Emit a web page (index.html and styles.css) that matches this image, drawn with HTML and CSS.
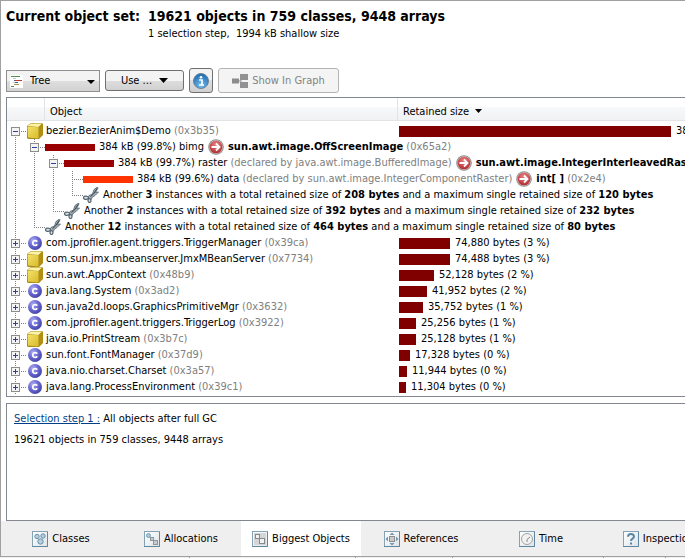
FILE: index.html
```html
<!DOCTYPE html>
<html lang="en">
<head>
<meta charset="utf-8">
<title>Heap Walker</title>
<link rel="stylesheet" href="styles.css">
</head>
<body>
<svg class="defs" aria-hidden="true">
  <defs>
    <radialGradient id="ball" cx="35%" cy="30%" r="75%"><stop offset="0" stop-color="#a9aaf2"/><stop offset="0.5" stop-color="#6a6ad2"/><stop offset="1" stop-color="#4444a6"/></radialGradient>
    <linearGradient id="face" x1="0" y1="0" x2="1" y2="1"><stop offset="0" stop-color="#f3e268"/><stop offset="1" stop-color="#d9bb2e"/></linearGradient>
    <radialGradient id="red" cx="50%" cy="30%" r="70%"><stop offset="0" stop-color="#e88484"/><stop offset="1" stop-color="#b52b30"/></radialGradient>
    <radialGradient id="blue" cx="50%" cy="80%" r="80%"><stop offset="0" stop-color="#72bdf0"/><stop offset="1" stop-color="#1d68b0"/></radialGradient>
    <linearGradient id="tile" x1="0" y1="0" x2="1" y2="1"><stop offset="0" stop-color="#ffffff"/><stop offset="1" stop-color="#dfe4e8"/></linearGradient>
  </defs>
  <symbol id="i-class" viewBox="0 0 16 16"><circle cx="8" cy="8" r="7" fill="url(#ball)"/><path d="M10.200 6.700A2.400 2.400 0 1 0 10.200 9.300" fill="none" stroke="#fff" stroke-width="1.800"/></symbol>
  <symbol id="i-cube" viewBox="0 0 16 16"><path d="M0 3 4 0H15L16 1V12L12 16H1L0 15Z" fill="#a98a18"/><path d="M0.5 3 4 .5H15L11.5 4Z" fill="#fbf3a6"/><path d="M11.500 4 15.500 1V11.500L12 15.500Z" fill="#b08f14"/><path d="M.5 3.500 11.500 4.200V15.500L1 14.500Z" fill="url(#face)"/></symbol>
  <symbol id="i-go" viewBox="0 0 16 16"><circle cx="8" cy="8" r="7.800" fill="#8d8d8d"/><circle cx="8" cy="8" r="7" fill="#c4b4b4"/><circle cx="8" cy="8" r="6.300" fill="url(#red)"/><path d="M3.500 8H11M8 4.500 11.500 8 8 11.500" fill="none" stroke="#fff" stroke-width="1.800"/></symbol>
  <symbol id="i-cut" viewBox="0 0 16 16"><path d="M14.500 0 11 2.500 9.500 7 6 8.500 4.500 10.500 7.500 13.500 9.500 10 12 8.500 15.500 5 12.500 5.500 15 1Z" fill="#9fadb5" stroke="#5f6e77" stroke-width=".9"/><path d="M14 1.500 10.500 7 7.500 9.500" fill="none" stroke="#39454c"/><ellipse cx="3" cy="10.800" rx="2.500" ry="1.600" fill="#d4dfe6" stroke="#56646d" stroke-width="1.200"/><ellipse cx="6.500" cy="13.600" rx="1.500" ry="1.900" fill="#d4dfe6" stroke="#56646d" stroke-width="1.200"/></symbol>
  <symbol id="i-plus" viewBox="0 0 9 9"><rect x=".5" y=".5" width="8" height="8" fill="#f4f4f2" stroke="#8c8c8c"/><path d="M2 4.500H7M4.500 2V7" stroke="#2c3f9c"/></symbol>
  <symbol id="i-minus" viewBox="0 0 9 9"><rect x=".5" y=".5" width="8" height="8" fill="#f4f4f2" stroke="#8c8c8c"/><path d="M2 4.500H7" stroke="#2c3f9c"/></symbol>
  <symbol id="i-tile" viewBox="0 0 16 16"><rect x=".5" y=".5" width="15" height="15" fill="url(#tile)" stroke="#86a3b5"/><path d="M15.500 1V15.500H0" fill="none" stroke="#5f87a0"/></symbol>
</svg>

<main class="window">
  <header class="summary">
    <h1 class="title">Current object set:</h1>
    <div class="title">19621 objects in 759 classes, 9448 arrays</div>
    <div class="subtitle">1 selection step,&nbsp; 1994 kB shallow size</div>
  </header>

  <div class="toolbar">
    <div class="picker">
      <svg class="picker-icon" viewBox="0 0 13 13" aria-hidden="true"><rect width="13" height="13" fill="#fff"/><path d="M1 1.500H10M1 11.500H4" stroke="#4d8d4d"/><path d="M3 3.500H6M3 7.500H5" stroke="#b9c2cf"/><path d="M4 5.500H6M5 7.500H8" stroke="#3f5e97"/><path d="M6 5.500H12" stroke="#c03a3a"/><path d="M4 9.500H9" stroke="#a89a48"/></svg>
      <select class="select" aria-label="View mode"><option>Tree</option></select>
      <svg class="picker-arrow" viewBox="0 0 8 4" aria-hidden="true"><path d="M0 0H8L4 4Z"/></svg>
    </div>
    <button class="button use" type="button">Use ...<svg class="arrow" viewBox="0 0 9 5" aria-hidden="true"><path d="M0 0H9L4.500 5Z"/></svg></button>
    <button class="button info" type="button" aria-label="Information"><svg class="icon" viewBox="0 0 16 16" aria-hidden="true"><circle cx="8" cy="8" r="7.500" fill="url(#blue)" stroke="#6b8296"/><circle cx="8" cy="4.300" r="1.300" fill="#fff"/><path d="M6 7H9V12M6 12H11" fill="none" stroke="#fff" stroke-width="1.700"/></svg></button>
    <button class="button graph" type="button" disabled><svg class="icon" viewBox="0 0 16 14" aria-hidden="true"><path d="M6 7H9M9 3V11" fill="none" stroke="#999"/><rect y="4.500" width="7" height="5" fill="#8c8c8c"/><rect x="8" width="8" height="6" fill="#929292"/><rect x="8" y="8" width="8" height="6" fill="#929292"/></svg>Show In Graph</button>
  </div>

  <section class="panel objects">
    <table class="tree">
      <colgroup><col class="col-icon"><col class="col-object"><col></colgroup>
      <thead>
        <tr><th aria-label="Type"></th><th>Object</th><th>Retained size<svg class="sort" viewBox="0 0 7 4" aria-hidden="true"><path d="M0 0H7L3.500 4Z"/></svg></th></tr>
      </thead>
      <tbody>
        <tr><td colspan="2"><div class="row"><i class="g down h"><svg><use href="#i-minus"/></svg></i><svg class="type"><use href="#i-cube"/></svg><span>bezier.BezierAnim$Demo <span class="id">(0x3b35)</span></span></div></td><td><div class="row"><b class="bar" style="width:272px"></b>384 kB (19 %)</div></td></tr>
        <tr><td colspan="3"><div class="row"><i class="g v"></i><i class="g v h"><svg><use href="#i-minus"/></svg></i><b class="bar ref"></b><span>384 kB (99.8%) bimg</span><svg class="go"><use href="#i-go"/></svg><span><strong>sun.awt.image.OffScreenImage</strong> <span class="id">(0x65a2)</span></span></div></td></tr>
        <tr><td colspan="3"><div class="row"><i class="g v"></i><i class="g v"></i><i class="g v h"><svg><use href="#i-minus"/></svg></i><b class="bar ref"></b><span>384 kB (99.7%) raster <span class="id">(declared by java.awt.image.BufferedImage)</span></span><svg class="go"><use href="#i-go"/></svg><span><strong>sun.awt.image.IntegerInterleavedRaster</strong></span></div></td></tr>
        <tr><td colspan="3"><div class="row"><i class="g v"></i><i class="g v"></i><i class="g v"></i><i class="g v h"></i><b class="bar ref hot"></b><span>384 kB (99.6%) data <span class="id">(declared by sun.awt.image.IntegerComponentRaster)</span></span><svg class="go"><use href="#i-go"/></svg><span><strong>int[ ]</strong> <span class="id">(0x2e4)</span></span></div></td></tr>
        <tr><td colspan="3"><div class="row"><i class="g v"></i><i class="g v"></i><i class="g v"></i><i class="g up h"></i><svg class="cut"><use href="#i-cut"/></svg><span>Another <strong>3</strong> instances with a total retained size of <strong>208 bytes</strong> and a maximum single retained size of <strong>120 bytes</strong></span></div></td></tr>
        <tr><td colspan="3"><div class="row"><i class="g v"></i><i class="g v"></i><i class="g up h"></i><svg class="cut"><use href="#i-cut"/></svg><span>Another <strong>2</strong> instances with a total retained size of <strong>392 bytes</strong> and a maximum single retained size of <strong>232 bytes</strong></span></div></td></tr>
        <tr><td colspan="3"><div class="row"><i class="g v"></i><i class="g up h"></i><svg class="cut"><use href="#i-cut"/></svg><span>Another <strong>12</strong> instances with a total retained size of <strong>464 bytes</strong> and a maximum single retained size of <strong>80 bytes</strong></span></div></td></tr>
        <tr><td colspan="2"><div class="row"><i class="g v h"><svg><use href="#i-plus"/></svg></i><svg class="type"><use href="#i-class"/></svg><span>com.jprofiler.agent.triggers.TriggerManager <span class="id">(0x39ca)</span></span></div></td><td><div class="row"><b class="bar" style="width:51px"></b>74,880 bytes (3 %)</div></td></tr>
        <tr><td colspan="2"><div class="row"><i class="g v h"><svg><use href="#i-plus"/></svg></i><svg class="type"><use href="#i-cube"/></svg><span>com.sun.jmx.mbeanserver.JmxMBeanServer <span class="id">(0x7734)</span></span></div></td><td><div class="row"><b class="bar" style="width:51px"></b>74,488 bytes (3 %)</div></td></tr>
        <tr><td colspan="2"><div class="row"><i class="g v h"><svg><use href="#i-plus"/></svg></i><svg class="type"><use href="#i-cube"/></svg><span>sun.awt.AppContext <span class="id">(0x48b9)</span></span></div></td><td><div class="row"><b class="bar" style="width:35px"></b>52,128 bytes (2 %)</div></td></tr>
        <tr><td colspan="2"><div class="row"><i class="g v h"><svg><use href="#i-plus"/></svg></i><svg class="type"><use href="#i-class"/></svg><span>java.lang.System <span class="id">(0x3ad2)</span></span></div></td><td><div class="row"><b class="bar" style="width:28px"></b>41,952 bytes (2 %)</div></td></tr>
        <tr><td colspan="2"><div class="row"><i class="g v h"><svg><use href="#i-plus"/></svg></i><svg class="type"><use href="#i-class"/></svg><span>sun.java2d.loops.GraphicsPrimitiveMgr <span class="id">(0x3632)</span></span></div></td><td><div class="row"><b class="bar" style="width:24px"></b>35,752 bytes (1 %)</div></td></tr>
        <tr><td colspan="2"><div class="row"><i class="g v h"><svg><use href="#i-plus"/></svg></i><svg class="type"><use href="#i-class"/></svg><span>com.jprofiler.agent.triggers.TriggerLog <span class="id">(0x3922)</span></span></div></td><td><div class="row"><b class="bar" style="width:17px"></b>25,256 bytes (1 %)</div></td></tr>
        <tr><td colspan="2"><div class="row"><i class="g v h"><svg><use href="#i-plus"/></svg></i><svg class="type"><use href="#i-cube"/></svg><span>java.io.PrintStream <span class="id">(0x3b7c)</span></span></div></td><td><div class="row"><b class="bar" style="width:17px"></b>25,128 bytes (1 %)</div></td></tr>
        <tr><td colspan="2"><div class="row"><i class="g v h"><svg><use href="#i-plus"/></svg></i><svg class="type"><use href="#i-class"/></svg><span>sun.font.FontManager <span class="id">(0x37d9)</span></span></div></td><td><div class="row"><b class="bar" style="width:11px"></b>17,328 bytes (0 %)</div></td></tr>
        <tr><td colspan="2"><div class="row"><i class="g v h"><svg><use href="#i-plus"/></svg></i><svg class="type"><use href="#i-class"/></svg><span>java.nio.charset.Charset <span class="id">(0x3a57)</span></span></div></td><td><div class="row"><b class="bar" style="width:8px"></b>11,944 bytes (0 %)</div></td></tr>
        <tr><td colspan="2"><div class="row"><i class="g v h"><svg><use href="#i-plus"/></svg></i><svg class="type"><use href="#i-class"/></svg><span>java.lang.ProcessEnvironment <span class="id">(0x39c1)</span></span></div></td><td><div class="row"><b class="bar" style="width:7px"></b>11,304 bytes (0 %)</div></td></tr>
      </tbody>
    </table>
  </section>

  <section class="panel steps">
    <p><a href="#step-1">Selection step 1 :</a> All objects after full GC</p>
    <p>19621 objects in 759 classes, 9448 arrays</p>
  </section>

  <nav class="tabs" aria-label="Heap walker views">
    <button class="tab" type="button"><svg class="icon" viewBox="0 0 16 16" aria-hidden="true"><use href="#i-tile"/><g fill="#b7d0e0" stroke="#6890aa"><circle cx="5" cy="5.500" r="2.200"/><circle cx="11" cy="5" r="2.200"/><circle cx="8.500" cy="10.500" r="2.700"/></g></svg>Classes</button>
    <button class="tab" type="button"><svg class="icon" viewBox="0 0 16 16" aria-hidden="true"><use href="#i-tile"/><circle cx="4.500" cy="4.500" r="2" fill="#a9c8da" stroke="#7ba0b8"/><path d="M6 6 11 11" stroke="#8b969d"/><rect x="6.500" y="6.500" width="3" height="3" fill="#c6cbce" stroke="#8b969d"/><rect x="9.500" y="9.500" width="4" height="4" fill="#c6cbce" stroke="#8b969d"/></svg>Allocations</button>
    <button class="tab active" type="button" aria-current="page"><svg class="icon" viewBox="0 0 16 16" aria-hidden="true"><use href="#i-tile"/><rect x="2" y="2" width="12" height="12" fill="#d3d5d6"/><g fill="#f3f3f3" stroke="#858a8d"><rect x="3.500" y="3.500" width="4" height="4"/><rect x="7.500" y="7.500" width="5" height="5"/></g></svg>Biggest Objects</button>
    <button class="tab" type="button"><svg class="icon" viewBox="0 0 16 16" aria-hidden="true"><use href="#i-tile"/><path d="M8 1.500 10.500 4H5.500ZM8 14.500 10.500 12H5.500ZM1.500 8 4 5.500V10.500ZM14.500 8 12 5.500V10.500Z" fill="#7098b2"/><rect x="5.500" y="5.500" width="5" height="5" fill="#c9c9c9" stroke="#8d8d8d"/></svg>References</button>
    <button class="tab" type="button"><svg class="icon" viewBox="0 0 16 16" aria-hidden="true"><use href="#i-tile"/><circle cx="8" cy="8" r="5.500" fill="#f2f2f2" stroke="#a2a2a2"/><path d="M11 6 8 8.500V11" fill="none" stroke="#868686"/></svg>Time</button>
    <button class="tab" type="button"><svg class="icon" viewBox="0 0 16 16" aria-hidden="true"><use href="#i-tile"/><path d="M5 5.800C5 2.200 11 2.200 11 5.500 11 7.500 8 7.500 8 10" fill="none" stroke="#5987a5" stroke-width="2"/><rect x="7" y="11.500" width="2" height="2" fill="#5987a5"/></svg>Inspections</button>
  </nav>
</main>
<footer class="status"><i></i><i></i><i></i><i></i><i></i><i></i></footer>
</body>
</html>
```

FILE: styles.css
```css
* { box-sizing: border-box; }

body {
  margin: 0;
  height: 100vh;
  display: flex;
  flex-direction: column;
  overflow: hidden;
  background: #fff;
  color: #000;
  font: 11px/16px Tahoma, "DejaVu Sans Condensed", sans-serif;
  white-space: nowrap;
}

button, select { font: inherit; color: inherit; }
svg { display: block; flex: none; }
.defs { position: absolute; width: 0; height: 0; }
.icon { width: 16px; height: 16px; }

.window {
  flex: 1;
  min-height: 0;
  display: flex;
  flex-direction: column;
  border: solid #a0a0a0;
  border-width: 1px 0 1px 1px;
}

.summary {
  display: grid;
  grid-template-columns: 142px 1fr;
  padding: 5px 0 0 5px;
}
.title { margin: 0; font-size: 14px; line-height: 20px; font-weight: bold; }
.subtitle { grid-column: 2; }

.toolbar {
  display: flex;
  align-items: center;
  gap: 5px;
  margin: 26px 0 4px 5px;
  height: 25px;
}
.picker { position: relative; width: 94px; }
.select {
  display: block;
  width: 100%;
  height: 22px;
  padding: 0 20px 0 23px;
  appearance: none;
  border: 1px solid #8e8f8f;
  border-radius: 0;
  background: linear-gradient(#f3f3f3 50%, #dedede 50%, #d2d2d2);
}
.picker-icon { position: absolute; left: 4px; top: 5px; width: 13px; height: 13px; }
.picker-arrow { position: absolute; right: 5px; top: 10px; width: 8px; height: 4px; }
.button {
  display: flex;
  align-items: center;
  justify-content: center;
  gap: 4px;
  height: 25px;
  padding: 0;
  border: 1px solid #707070;
  border-radius: 3px;
  background: linear-gradient(#f3f3f3 50%, #dedede 50%, #d0d0d0);
}
.use { width: 79px; height: 21px; gap: 7px; }
.arrow { width: 9px; height: 5px; }
.info { width: 24px; }
.graph { width: 121px; border-color: #b4b4b4; background: #f4f4f4; color: #838383; }

.panel { border: solid #828790; border-width: 1px 0 1px 1px; margin-left: 5px; }

.objects { padding-bottom: 1px; overflow: hidden; }
.tree { width: 100%; table-layout: fixed; border-collapse: separate; border-spacing: 0; }
.col-icon { width: 38px; }
.col-object { width: 353px; }
.tree th {
  height: 23px;
  padding: 5px 0 0 5px;
  text-align: left;
  font-weight: normal;
  border: solid #e2e3e5;
  border-width: 0 1px 1px 0;
  background: linear-gradient(#fff 40%, #f7f8fa 40%, #f1f2f4);
}
.tree th:last-child { border-right: 0; }
.tree tbody::before { content: ""; display: block; height: 2px; }
.tree td { padding: 0; overflow: hidden; }
.tree td + td { padding-left: 1px; }
.sort { display: inline-block; width: 7px; height: 4px; margin-left: 6px; vertical-align: 2px; }

.row { display: flex; align-items: center; height: 16px; }
.row > span { flex: none; }
.id { color: #808080; }
.bar { flex: none; height: 11px; margin-right: 5px; background: #800000; }
.bar.ref { width: 50px; height: 7px; margin-right: 4px; background: #990000; }
.bar.hot { background: #ff3300; }
.type { width: 16px; height: 16px; margin: 0 3px 0 1px; }
.cut { width: 16px; height: 16px; margin-right: 4px; }
.go { width: 16px; height: 16px; margin: 0 4px; }

/* Guide cells: a dotted trunk and a dotted branch to the node. */
.g {
  --trunk: repeating-linear-gradient(#808080 0 1px, transparent 1px 2px) 8px 0 / 1px 100% no-repeat;
  --branch: repeating-linear-gradient(90deg, #808080 0 1px, transparent 1px 2px) 8px 8px / 11px 1px no-repeat;
  flex: none;
  width: 19px;
  height: 16px;
  padding: 4px;
}
.g svg { width: 9px; height: 9px; }
.g.v { background: var(--trunk); }
.g.v.h { background: var(--trunk), var(--branch); }
.g.up.h { background: repeating-linear-gradient(#808080 0 1px, transparent 1px 2px) 8px 0 / 1px 8px no-repeat, var(--branch); }
.g.down.h { background: repeating-linear-gradient(#808080 0 1px, transparent 1px 2px) 8px 8px / 1px 8px no-repeat, var(--branch); }

.steps { flex: 1; min-height: 0; margin-top: 6px; padding: 7px 0 0 7px; }
.steps p { margin: 0 0 5px; }
.steps a { color: #003f87; }

.tabs { flex: none; display: flex; height: 35px; background: #efefef; overflow: hidden; }
.tab {
  flex: 0 0 120px;
  display: flex;
  align-items: center;
  justify-content: center;
  gap: 4px;
  padding: 0;
  border: 0;
  background: none;
}
.tab.active { background: #fff; }

.status { flex: none; display: flex; height: 1px; background: #f0f0f0; }
.status i { border-right: 1px solid #a0a0a0; flex: 96 0 0; }
.status i:nth-child(1) { flex-grow: 190; }
.status i:nth-child(2) { flex-grow: 167; }
.status i:nth-child(4) { flex-grow: 151; }
.status i:nth-child(5) { flex-grow: 62; }
.status i:nth-child(6) { flex-grow: 19; border: 0; }
```
